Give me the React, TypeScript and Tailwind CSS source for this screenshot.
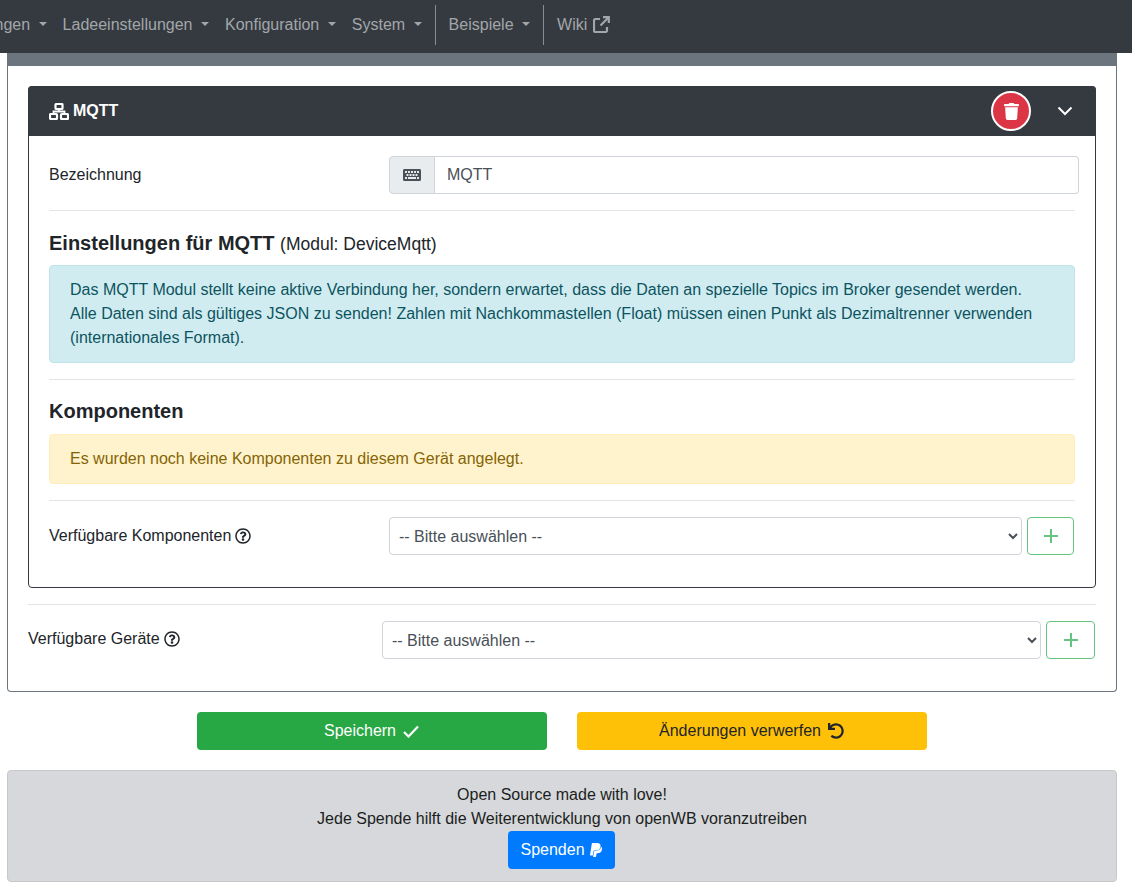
import React from "react";
import { FaTrash, FaKeyboard, FaRegQuestionCircle, FaUndo, FaPaypal } from "react-icons/fa";

const Caret = () => (
  <span className="ml-[8.5px] inline-block w-0 h-0 border-x-[4.8px] border-x-transparent border-t-[4.8px] border-t-current translate-y-[-1px]" />
);

const NavItem = ({ label, caret = true, cls = "" }: { label: string; caret?: boolean; cls?: string }) => (
  <span className={`flex items-center px-2 pb-[1px] whitespace-nowrap ${cls}`}>
    {label}
    {caret && <Caret />}
  </span>
);

const Network = () => (
  <svg width="20" height="17" viewBox="0 0 20 17" fill="none" stroke="white" strokeWidth="2.2">
    <rect x="6.5" y="1" width="7" height="5" rx="0.8" />
    <rect x="1" y="11" width="7" height="5" rx="0.8" />
    <rect x="12" y="11" width="7" height="5" rx="0.8" />
    <path d="M10 6V8.5M4.5 11V8.5H15.5V11" strokeWidth="1.8" />
  </svg>
);

const Ext = () => (
  <svg width="17" height="17" viewBox="0 0 17 17" fill="none" stroke="currentColor" strokeWidth="2.2">
    <path d="M7 3H2.5A1.5 1.5 0 0 0 1 4.5v10A1.5 1.5 0 0 0 2.5 16h10a1.5 1.5 0 0 0 1.5-1.5V11" />
    <path d="M10 1.2h5.8V7M15.5 1.5 7.5 9.5" />
  </svg>
);

const Plus = () => (
  <svg width="14" height="14" viewBox="0 0 14 14" stroke="#67c47f" strokeWidth="2">
    <path d="M7 0v14M0 7h14" />
  </svg>
);

const Chevron = () => (
  <svg width="16" height="10" viewBox="0 0 16 10" fill="none" stroke="white" strokeWidth="2">
    <path d="M1.5 1.5 8 8l6.5-6.5" />
  </svg>
);

const Check = () => (
  <svg width="16" height="13" viewBox="0 0 16 13" fill="none" stroke="white" strokeWidth="2.2">
    <path d="M1 7l4.5 4.5L15 1.5" />
  </svg>
);

const Help = () => <FaRegQuestionCircle className="inline-block text-[16px] text-[#212529]" />;

const SelectBox = () => (
  <select className="flex-1 min-w-0 h-[38px] rounded border border-[#ced4da] bg-white pl-[5px] text-[#495057] text-base">
    <option>-- Bitte auswählen --</option>
  </select>
);

const Hr = () => <div className="h-px bg-[#e3e4e6]" />;

export default function App() {
  return (
    <div className="w-[1132px] h-[891px] overflow-hidden bg-white text-[#212529] text-base font-['Liberation_Sans',Arial,sans-serif]">
      <nav className="h-[53px] pb-[3px] bg-[#343a40] text-[#a3a6a9] flex items-center ml-[-74px]">
        <NavItem label="Einstellungen" />
        <NavItem label="Ladeeinstellungen" />
        <NavItem label="Konfiguration" />
        <NavItem label="System" />
        <div className="w-px h-[40px] bg-[#8a8d90] ml-[5px]" />
        <NavItem label="Beispiele" cls="ml-[5px]" />
        <div className="w-px h-[40px] bg-[#8a8d90] ml-[5px]" />
        <span className="flex items-center gap-[6px] ml-[5px] px-2 pb-[1px]">
          Wiki <Ext />
        </span>
      </nav>

      <div className="mx-[7px] w-[1110px]">
        <section className="h-[639px] border border-[#6c757d] border-t-0 rounded-b">
          <div className="h-[13px] bg-[#6c757d]" />
          <div className="px-[20px] pt-[20px]">
            <div className="h-[502px] border border-[#343a40] rounded">
              <div className="mx-[-1px] mt-[-1px] h-[50px] bg-[#343a40] rounded-t flex items-center text-white font-bold pl-[21px]">
                <Network />
                <span className="ml-[4px]">MQTT</span>
                <div className="ml-auto flex items-center">
                  <span className="w-[40px] h-[40px] rounded-full bg-[#dc3545] border-2 border-white flex items-center justify-center">
                    <FaTrash className="text-white text-[17px]" />
                  </span>
                  <span className="ml-[26px] mr-[23px] flex">
                    <Chevron />
                  </span>
                </div>
              </div>

              <div className="pl-[20px] pr-[20px]">
                <div className="flex items-center mt-[20px]">
                  <label className="w-[340px] shrink-0">Bezeichnung</label>
                  <div className="flex h-[38px] w-[690px] shrink-0">
                    <span className="w-[46px] bg-[#e9ecef] border border-[#ced4da] rounded-l flex items-center justify-center text-[#495057]">
                      <FaKeyboard className="text-[18px]" />
                    </span>
                    <span className="flex-1 border border-l-0 border-[#ced4da] rounded-r flex items-center pl-[12px] text-[#495057]">
                      MQTT
                    </span>
                  </div>
                </div>

                <div className="mt-[16px]"><Hr /></div>

                <h3 className="mt-[20px] text-[20px] leading-[24px] font-bold">
                  Einstellungen für MQTT <span className="text-[17.5px] font-normal">(Modul: DeviceMqtt)</span>
                </h3>

                <div className="mt-[9px] h-[98px] bg-[#d1ecf1] border border-[#bee5eb] rounded px-[20px] py-[12px] leading-[24px] text-[#0c5460]">
                  Das MQTT Modul stellt keine aktive Verbindung her, sondern erwartet, dass die Daten an spezielle Topics im Broker gesendet werden.
                  <br />
                  Alle Daten sind als gültiges JSON zu senden! Zahlen mit Nachkommastellen (Float) müssen einen Punkt als Dezimaltrenner verwenden (internationales Format).
                </div>

                <div className="mt-[16px]"><Hr /></div>

                <h3 className="mt-[19px] text-[20px] leading-[24px] font-bold">Komponenten</h3>

                <div className="mt-[11px] h-[50px] bg-[#fff3cd] border border-[#ffeeba] rounded px-[20px] flex items-center text-[#856404]">
                  Es wurden noch keine Komponenten zu diesem Gerät angelegt.
                </div>

                <div className="mt-[16px]"><Hr /></div>

                <div className="flex items-center mt-[16px] mr-[1px]">
                  <label className="w-[340px] shrink-0 flex items-center gap-[4px]">
                    Verfügbare Komponenten <Help />
                  </label>
                  <SelectBox />
                  <button className="ml-[5px] w-[47px] h-[38px] border border-[#67c47f] rounded flex items-center justify-center">
                    <Plus />
                  </button>
                </div>
              </div>
            </div>

            <div className="mt-[16px]"><Hr /></div>

            <div className="flex items-center mt-[16px] mr-[1px]">
              <label className="w-[354px] shrink-0 flex items-center gap-[4px] translate-y-[-1px]">
                Verfügbare Geräte <Help />
              </label>
              <SelectBox />
              <button className="ml-[5px] w-[49px] h-[38px] border border-[#67c47f] rounded flex items-center justify-center">
                <Plus />
              </button>
            </div>
          </div>
        </section>

        <div className="flex justify-center gap-[30px] mt-[20px]">
          <button className="w-[350px] h-[38px] rounded bg-[#28a745] text-white flex items-center justify-center gap-[7px] pr-[1px]">
            Speichern <Check />
          </button>
          <button className="w-[350px] h-[38px] rounded bg-[#ffc107] text-[#212529] flex items-center justify-center gap-[7px] pr-[1px]">
            Änderungen verwerfen <FaUndo className="text-[16px]" />
          </button>
        </div>

        <footer className="mt-[20px] h-[112px] bg-[#d6d8db] border border-[#c6c8ca] rounded flex flex-col items-center pt-[12px] text-[#1b1e21] leading-[24px]">
          <div>Open Source made with love!</div>
          <div>Jede Spende hilft die Weiterentwicklung von openWB voranzutreiben</div>
          <button className="mr-[2px] pl-[2px] w-[107px] h-[38px] rounded bg-[#007bff] text-white flex items-center justify-center gap-[3px]">
            Spenden <FaPaypal className="text-[16px]" />
          </button>
        </footer>
      </div>
    </div>
  );
}
